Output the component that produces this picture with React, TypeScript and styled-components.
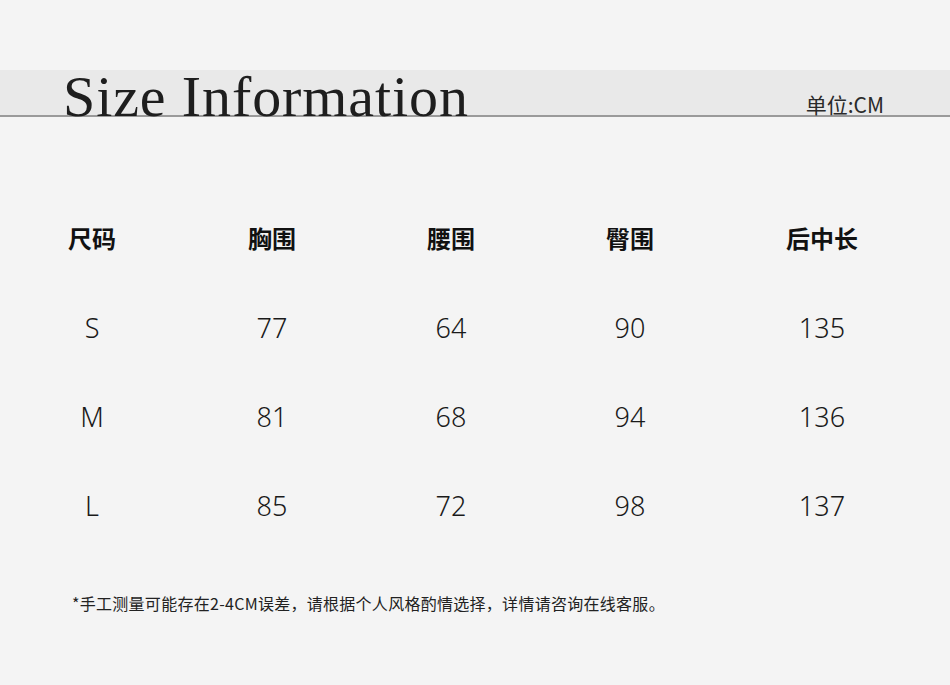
import React from "react";
import styled, { createGlobalStyle } from "styled-components";

const Global = createGlobalStyle`
  html, body { margin: 0; padding: 0; background: #f4f4f4; }
  body { width: 950px; height: 685px; overflow: hidden; font-family: "Noto Sans", "Noto Sans CJK SC", sans-serif; }
`;

const Page = styled.div`
  width: 950px;
  height: 685px;
  background: #f4f4f4;
  padding-top: 70px;
  box-sizing: border-box;
`;

const Band = styled.div`
  height: 45px;
  background: #e9e9e9;
  border-bottom: 2px solid #9a9a9a;
  display: flex;
  align-items: flex-end;
  justify-content: space-between;
  padding: 0 66px 0 63px;
`;

const Title = styled.h1`
  margin: 0;
  font-family: "Liberation Serif", "DejaVu Serif", serif;
  font-weight: 400;
  font-size: 58px;
  line-height: 1;
  color: #1e1e1e;
  letter-spacing: 0.9px;
  margin-bottom: -11px;
`;

const Unit = styled.div`
  font-family: "Noto Sans CJK SC", sans-serif;
  font-size: 21px;
  color: #2a2a2a;
  line-height: 1;
  margin-bottom: 0px;
`;

const Table = styled.div`
  display: grid;
  grid-template-columns: 180px 180px 178px 180px 204px;
  grid-auto-rows: 89px;
  margin: 76px 0 0 2px;
  align-items: center;
`;

const Cell = styled.div<{ $head?: boolean }>`
  text-align: center;
  font-family: ${(p) => (p.$head ? `"Noto Sans CJK SC", sans-serif` : `"Noto Sans", "Noto Sans CJK SC", sans-serif`)};
  font-size: ${(p) => (p.$head ? "24px" : "27px")};
  font-weight: ${(p) => (p.$head ? 700 : 300)};
  color: ${(p) => (p.$head ? "#111" : "#1a1a1a")};
  line-height: 1;
  margin-top: ${(p) => (p.$head ? "0" : "2px")};
`;

const Note = styled.p`
  margin: 42px 0 0 72px;
  font-family: "Noto Sans CJK SC", sans-serif;
  font-size: 16px;
  letter-spacing: 0.28px;
  color: #222;
`;

const head = ["尺码", "胸围", "腰围", "臀围", "后中长"];
const rows = [
  ["S", "77", "64", "90", "135"],
  ["M", "81", "68", "94", "136"],
  ["L", "85", "72", "98", "137"],
];

export default function App() {
  return (
    <Page>
      <Global />
      <Band>
        <Title>Size Information</Title>
        <Unit>单位:CM</Unit>
      </Band>
      <Table>
        {head.map((h) => (
          <Cell $head key={h}>{h}</Cell>
        ))}
        {rows.map((r) =>
          r.map((c, i) => <Cell key={r[0] + i}>{c}</Cell>)
        )}
      </Table>
      <Note>*手工测量可能存在2-4CM误差，请根据个人风格酌情选择，详情请咨询在线客服。</Note>
    </Page>
  );
}
